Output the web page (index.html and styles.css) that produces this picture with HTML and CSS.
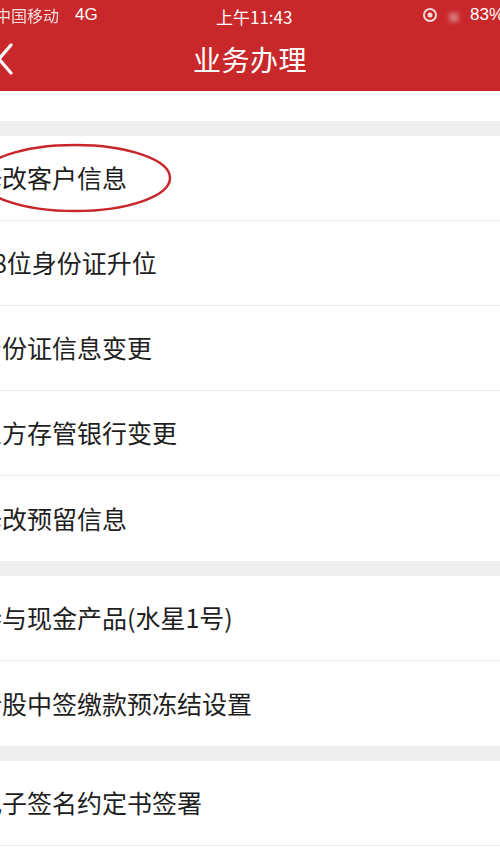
FILE: index.html
```html
<!DOCTYPE html>
<html lang="zh">
<head>
<meta charset="utf-8">
<link rel="stylesheet" href="styles.css">
</head>
<body>
<div class="page">
  <header class="header">
    <div class="status">
      <div class="status-left"><span class="carrier">中国移动</span><span class="net">4G</span></div>
      <div class="status-time">上午11:43</div>
      <div class="status-right">
        <svg class="lock" width="16" height="16" viewBox="0 0 16 16"><circle cx="8" cy="8" r="6" fill="none" stroke="#f4d6d6" stroke-width="2"/><circle cx="8" cy="8" r="2.5" fill="#f4d6d6"/></svg>
        <span class="blur">◼</span>
        <span class="batt">83%</span>
      </div>
    </div>
    <div class="nav">
      <svg class="back" width="20" height="34" viewBox="0 0 20 34"><polyline points="13,3 1,17 13,31" fill="none" stroke="#fff" stroke-width="3.2" stroke-linecap="round" stroke-linejoin="round"/></svg>
      <h1 class="title">业务办理</h1>
    </div>
  </header>
  <div class="blank"></div>
  <div class="gap"></div>
  <div class="group">
    <div class="row circled"><span class="label">修改客户信息</span>
      <svg class="ellipse" width="200" height="80" viewBox="0 0 200 80"><ellipse cx="75" cy="40" rx="95" ry="33" fill="none" stroke="#c8262a" stroke-width="2.5"/></svg>
    </div>
    <div class="row"><span class="label digits">18位身份证升位</span></div>
    <div class="row"><span class="label">身份证信息变更</span></div>
    <div class="row"><span class="label">三方存管银行变更</span></div>
    <div class="row last"><span class="label">修改预留信息</span></div>
  </div>
  <div class="gap"></div>
  <div class="group">
    <div class="row"><span class="label">参与现金产品(水星1号)</span></div>
    <div class="row last"><span class="label">新股中签缴款预冻结设置</span></div>
  </div>
  <div class="gap"></div>
  <div class="group">
    <div class="row"><span class="label">电子签名约定书签署</span></div>
    <div class="row"><span class="label">&nbsp;</span></div>
  </div>
</div>
</body>
</html>
```
FILE: styles.css
```css
html, body {
  margin: 0;
  padding: 0;
  background: #ffffff;
}
body {
  font-family: "Noto Sans CJK SC", "Noto Sans", sans-serif;
  overflow: hidden;
}
.page {
  width: 500px;
  height: 860px;
  overflow: hidden;
  background: #ffffff;
}
.header {
  background: #c9282a;
  height: 91px;
  color: #fff;
}
.status {
  height: 30px;
  display: flex;
  align-items: center;
  justify-content: space-between;
  font-size: 16px;
  position: relative;
}
.status-left {
  display: flex;
  align-items: center;
  gap: 16px;
  margin-left: -5px;
}
.carrier {
  color: #f3dede;
  filter: blur(0.6px);
}
.net {
  font-family: "Liberation Sans", Arial, sans-serif;
  font-size: 17px;
}
.status-time {
  position: absolute;
  left: 216px;
  top: 4px;
  font-size: 17px;
}
.status-right {
  display: flex;
  align-items: center;
  gap: 10px;
  margin-right: -4px;
}
.blur {
  color: #d87a7c;
  filter: blur(2px);
  font-size: 14px;
}
.batt {
  font-family: "Liberation Sans", Arial, sans-serif;
  font-size: 17px;
}
.nav {
  height: 61px;
  display: flex;
  align-items: center;
  justify-content: center;
  position: relative;
}
.back {
  position: absolute;
  left: -2px;
  top: 12px;
}
.title {
  margin: 0 0 4px 0;
  font-size: 28px;
  font-weight: 400;
  letter-spacing: 0.5px;
}
.blank {
  height: 30px;
  background: #fff;
}
.gap {
  height: 15px;
  background: #efefef;
}
.group {
  background: #fff;
}
.row {
  height: 84px;
  border-bottom: 1px solid #ebebeb;
  display: flex;
  align-items: center;
  position: relative;
}
.row.last {
  border-bottom: none;
  height: 85px;
}
.label {
  margin-left: -23px;
  margin-top: -2px;
  font-size: 25px;
  color: #1e1e1e;
  white-space: nowrap;
}
.label.digits {
  margin-left: -21px;
}
.ellipse {
  position: absolute;
  left: 0;
  top: 2px;
}
```
